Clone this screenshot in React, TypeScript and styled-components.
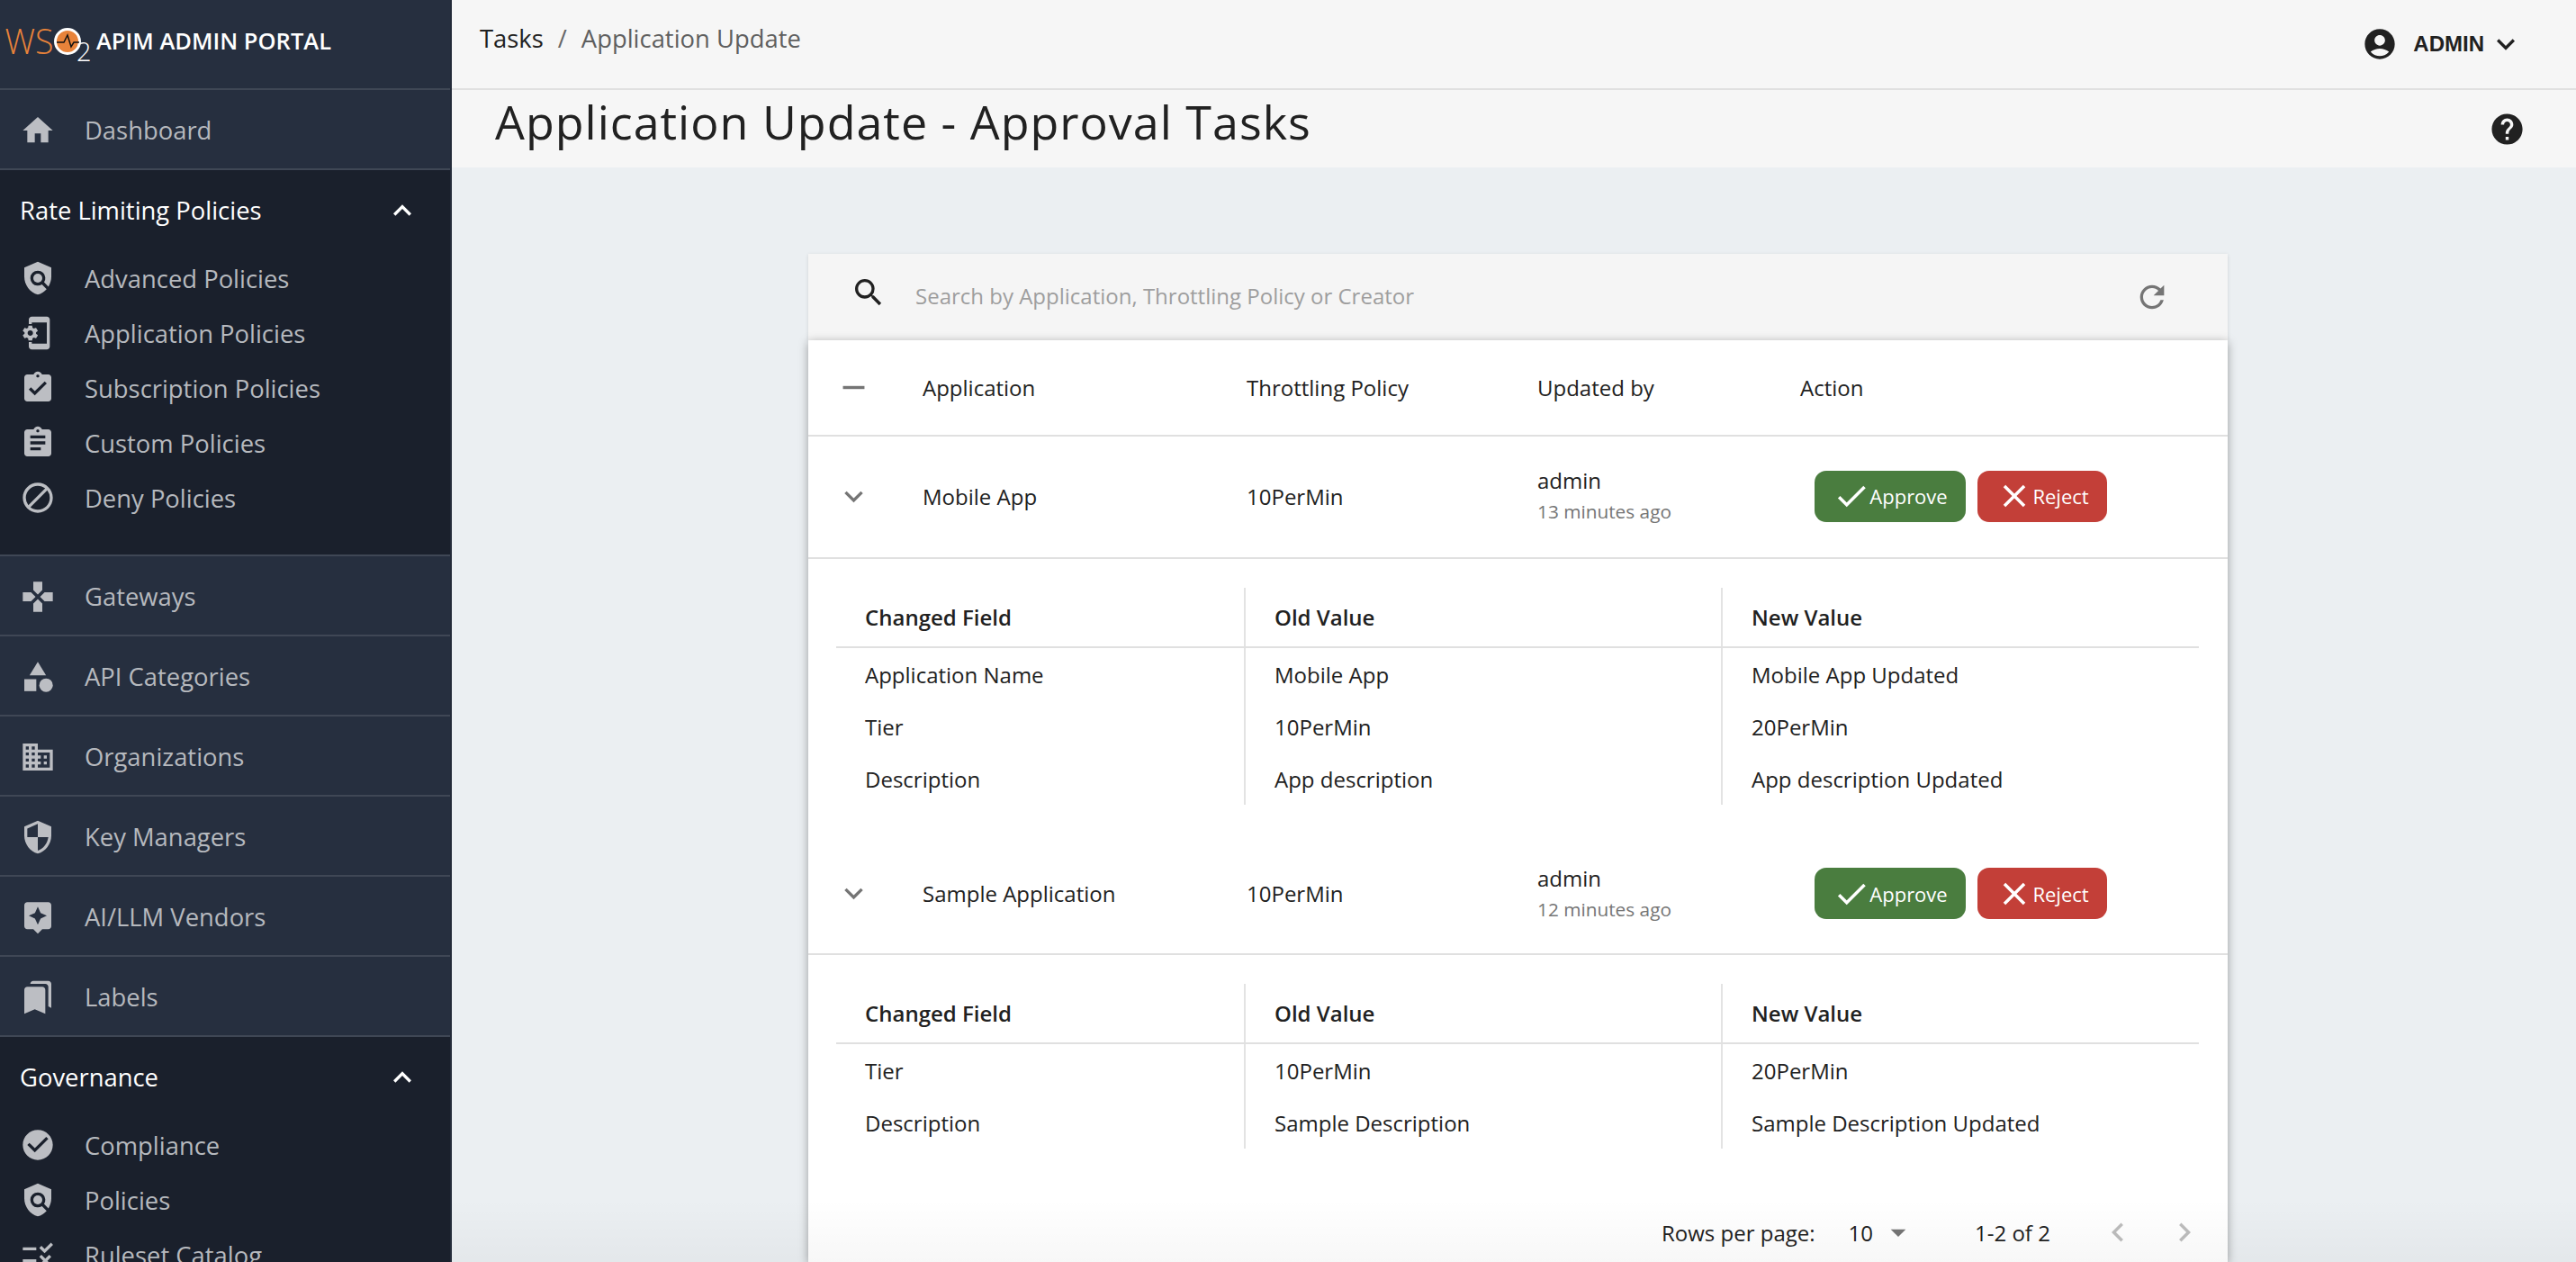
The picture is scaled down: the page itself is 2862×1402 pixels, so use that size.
import React from 'react';
import styled, { createGlobalStyle } from 'styled-components';
import {
  MdHome, MdPolicy, MdPhonelinkSetup, MdAssignmentTurnedIn, MdAssignment, MdBlock, MdGamepad,
  MdCategory, MdBusiness, MdSecurity, MdAssistant, MdBookmarks, MdCheckCircle, MdRule,
  MdKeyboardArrowUp, MdKeyboardArrowDown, MdAccountCircle, MdHelp, MdSearch, MdRefresh, MdRemove,
  MdCheck, MdClose, MdArrowDropDown, MdChevronLeft, MdChevronRight,
} from 'react-icons/md';

const Global = createGlobalStyle`
  html, body { margin: 0; padding: 0; height: 1402px; overflow: hidden; background: #ebeff2; }
  body { font-family: "Open Sans", "Liberation Sans", sans-serif; color: #212121; }
  * { box-sizing: border-box; }
`;

const Page = styled.div`
  display: flex;
  width: 2862px;
  height: 1402px;
  overflow: hidden;
`;

const Sidebar = styled.nav`
  flex: 0 0 502px;
  height: 1402px;
  overflow: hidden;
  background: #1a202c;
  border-right: 2px solid #232b39;
`;

const Brand = styled.div`
  display: flex;
  align-items: center;
  height: 100px;
  padding: 0 0 8px 6px;
  background: #262f3f;
  border-bottom: 2px solid #3f4755;
`;

const BrandName = styled.span`
  margin-left: 5px;
  font-size: 25.5px;
  font-weight: 600;
  color: #fff;
  white-space: nowrap;
`;

const NavRow = styled.div`
  display: flex;
  align-items: center;
  height: 89px;
  padding: 2px 0 0 22px;
  background: #262f3f;
  border-bottom: 2px solid #3f4755;
`;

const IconSlot = styled.span`
  display: flex;
  flex: 0 0 40px;
  width: 40px;
  height: 40px;
  margin-right: 32px;
  color: #bcbec3;
  font-size: 40px;
`;

const NavLabel = styled.span`
  font-size: 27.4px;
  color: #b6b9be;
  white-space: nowrap;
`;

const Group = styled.section<{ $bottom: number }>`
  padding-bottom: ${p => p.$bottom}px;
  background: #1a202c;
`;

const GroupHead = styled.div`
  display: flex;
  align-items: center;
  justify-content: space-between;
  height: 90px;
  padding: 0 33px 1px 22px;
  font-size: 27.4px;
  color: #fff;
  svg { font-size: 40px; }
`;

const GroupItem = styled.div`
  display: flex;
  align-items: center;
  height: 61px;
  padding: 0 0 1px 22px;
`;

const DividerTop = styled.div`
  height: 2px;
  background: #3f4755;
`;

const Main = styled.main`
  position: relative;
  flex: 1;
  height: 1402px;
  overflow: hidden;
`;

const TopBar = styled.header`
  display: flex;
  align-items: center;
  justify-content: space-between;
  height: 100px;
  padding: 0 58px 14px 31px;
  background: #f6f6f6;
  border-bottom: 2px solid #e0e0e0;
`;

const Crumbs = styled.div`
  display: flex;
  align-items: center;
  font-size: 27.4px;
  gap: 16px;
`;

const CrumbSep = styled.span`
  color: #666;
`;

const CrumbCurrent = styled.span`
  color: #5f5f5f;
`;

const UserMenu = styled.div`
  display: flex;
  align-items: center;
  margin-top: 14px;
  color: #212121;
`;

const UserName = styled.span`
  margin: 0 4px 0 17px;
  font-family: "Liberation Sans", Arial, sans-serif;
  font-size: 24px;
  font-weight: 700;
`;

const TitleBand = styled.div`
  display: flex;
  align-items: center;
  justify-content: space-between;
  height: 86px;
  padding: 0 56px 0 48px;
  background: #f6f6f6;
  color: #212121;
`;

const Title = styled.h1`
  margin: -17px 0 0;
  font-size: 52px;
  font-weight: 400;
  letter-spacing: 1px;
  white-space: nowrap;
`;

const Content = styled.div`
  padding: 96px 0 0 396px;
`;

const Card = styled.div`
  width: 1577px;
`;

const SearchBar = styled.div`
  display: flex;
  align-items: center;
  height: 96px;
  padding: 0 64px 0 47px;
  background: #f5f5f5;
  box-shadow: 0 1px 4px rgba(0, 0, 0, 0.12);
`;

const SearchGlyph = styled.span`
  display: flex;
  margin: -10px 32px 0 0;
  color: #212121;
  font-size: 40px;
`;

const Placeholder = styled.span`
  flex: 1;
  margin-top: -3px;
  font-size: 24px;
  color: #9e9e9e;
`;

const RefreshGlyph = styled.span`
  display: flex;
  color: #757575;
  font-size: 40px;
`;

const Sheet = styled.div`
  height: 1024px;
  background: #fff;
  box-shadow: 0 2px 10px rgba(0, 0, 0, 0.35);
`;

const TaskRow = styled.div<{ $height: number; $lift?: number }>`
  display: grid;
  grid-template-columns: 127px 360px 323px 292px 1fr;
  align-items: center;
  height: ${p => p.$height}px;
  padding-bottom: ${p => p.$lift ?? 0}px;
  border-bottom: 2px solid #e0e0e0;
  font-size: 24px;
  color: #212121;
`;

const RowToggle = styled.span`
  display: flex;
  padding-left: 30px;
  color: #757575;
  font-size: 41px;
`;

const Meta = styled.div`
  line-height: 35px;
`;

const MetaSub = styled.div`
  font-size: 20.8px;
  color: #757575;
`;

const Actions = styled.div`
  display: flex;
  gap: 13px;
  margin-left: 16px;
`;

const ActionButton = styled.div<{ $bg: string; $width: number }>`
  display: flex;
  align-items: center;
  justify-content: center;
  width: ${p => p.$width}px;
  height: 57px;
  border-radius: 13px;
  background: ${p => p.$bg};
  color: #fff;
  font-size: 22px;
  svg { font-size: 42px; margin-right: -1px; }
`;

const Detail = styled.div<{ $top: number; $bottom: number }>`
  margin: 0 32px 0 31px;
  padding: ${p => p.$top}px 0 ${p => p.$bottom}px;
`;

const DetailRow = styled.div<{ $head?: boolean }>`
  display: grid;
  grid-template-columns: 455px 530px 1fr;
  height: ${p => (p.$head ? 67 : 58)}px;
  font-size: 24px;
  font-weight: ${p => (p.$head ? 600 : 400)};
  border-bottom: ${p => (p.$head ? '2px solid #e0e0e0' : 'none')};
`;

const DetailCell = styled.div<{ $line?: boolean }>`
  display: flex;
  align-items: center;
  padding-left: 32px;
  border-right: ${p => (p.$line ? '2px solid #e3e3e3' : 'none')};
`;

const Pager = styled.div`
  display: flex;
  align-items: center;
  height: 60px;
  margin-top: 63px;
  padding-left: 948px;
  font-size: 24px;
  color: #212121;
  white-space: nowrap;
`;

const PagerValue = styled.span`
  margin-left: 37px;
`;

const PagerCaret = styled.span`
  display: flex;
  margin-left: 8px;
  color: #757575;
  font-size: 40px;
`;

const PagerRange = styled.span`
  margin-left: 65px;
  margin-right: 54px;
`;

const PagerArrow = styled.span`
  display: flex;
  flex: 0 0 74px;
  color: #bdbdbd;
  font-size: 42px;
`;

const BottomFade = styled.div`
  position: absolute;
  left: 0;
  right: 0;
  bottom: 0;
  height: 70px;
  pointer-events: none;
  background: linear-gradient(rgba(0, 0, 0, 0), rgba(0, 0, 0, 0.03));
`;

const Logo = () => (
  <svg width="96" height="72" viewBox="0 0 96 72" aria-label="WSO2">
    <text x="-0.5" y="51" fontFamily="Open Sans" fontWeight="300" fontSize="39" fill="#e8833a" textLength="54" lengthAdjust="spacingAndGlyphs">WS</text>
    <circle cx="69" cy="37" r="13.5" fill="#e8833a" stroke="#fff" strokeWidth="3" />
    <path d="M57 38h8l4-8 4 13 3-5h6" fill="none" stroke="#111" strokeWidth="1.5" />
    <text x="79" y="59" fontFamily="Open Sans" fontWeight="300" fontSize="29" fill="#fff">2</text>
  </svg>
);

const rateItems: [React.ReactNode, string][] = [
  [<MdPolicy />, 'Advanced Policies'],
  [<MdPhonelinkSetup />, 'Application Policies'],
  [<MdAssignmentTurnedIn />, 'Subscription Policies'],
  [<MdAssignment />, 'Custom Policies'],
  [<MdBlock />, 'Deny Policies'],
];

const midItems: [React.ReactNode, string][] = [
  [<MdGamepad />, 'Gateways'],
  [<MdCategory />, 'API Categories'],
  [<MdBusiness />, 'Organizations'],
  [<MdSecurity />, 'Key Managers'],
  [<MdAssistant />, 'AI/LLM Vendors'],
  [<MdBookmarks />, 'Labels'],
];

const govItems: [React.ReactNode, string][] = [
  [<MdCheckCircle />, 'Compliance'],
  [<MdPolicy />, 'Policies'],
  [<MdRule />, 'Ruleset Catalog'],
];

const tasks = [
  {
    name: 'Mobile App', policy: '10PerMin', by: 'admin', when: '13 minutes ago', height: 136, lift: 2, top: 32, bottom: 32,
    changes: [
      ['Application Name', 'Mobile App', 'Mobile App Updated'],
      ['Tier', '10PerMin', '20PerMin'],
      ['Description', 'App description', 'App description Updated'],
    ],
  },
  {
    name: 'Sample Application', policy: '10PerMin', by: 'admin', when: '12 minutes ago', height: 135, lift: 0, top: 32, bottom: 0,
    changes: [
      ['Tier', '10PerMin', '20PerMin'],
      ['Description', 'Sample Description', 'Sample Description Updated'],
    ],
  },
];

export default function App() {
  return (
    <Page>
      <Global />
      <Sidebar>
        <Brand>
          <Logo />
          <BrandName>APIM ADMIN PORTAL</BrandName>
        </Brand>
        <NavRow>
          <IconSlot><MdHome /></IconSlot>
          <NavLabel>Dashboard</NavLabel>
        </NavRow>
        <Group $bottom={32}>
          <GroupHead>Rate Limiting Policies<MdKeyboardArrowUp /></GroupHead>
          {rateItems.map(([icon, label]) => (
            <GroupItem key={label}>
              <IconSlot>{icon}</IconSlot>
              <NavLabel>{label}</NavLabel>
            </GroupItem>
          ))}
        </Group>
        <DividerTop />
        {midItems.map(([icon, label]) => (
          <NavRow key={label}>
            <IconSlot>{icon}</IconSlot>
            <NavLabel>{label}</NavLabel>
          </NavRow>
        ))}
        <Group $bottom={0}>
          <GroupHead>Governance<MdKeyboardArrowUp /></GroupHead>
          {govItems.map(([icon, label]) => (
            <GroupItem key={label}>
              <IconSlot>{icon}</IconSlot>
              <NavLabel>{label}</NavLabel>
            </GroupItem>
          ))}
        </Group>
      </Sidebar>
      <Main>
        <TopBar>
          <Crumbs>
            <span>Tasks</span>
            <CrumbSep>/</CrumbSep>
            <CrumbCurrent>Application Update</CrumbCurrent>
          </Crumbs>
          <UserMenu>
            <MdAccountCircle size={40} />
            <UserName>ADMIN</UserName>
            <MdKeyboardArrowDown size={40} />
          </UserMenu>
        </TopBar>
        <TitleBand>
          <Title>Application Update - Approval Tasks</Title>
          <MdHelp size={41} />
        </TitleBand>
        <Content>
          <Card>
            <SearchBar>
              <SearchGlyph><MdSearch /></SearchGlyph>
              <Placeholder>Search by Application, Throttling Policy or Creator</Placeholder>
              <RefreshGlyph><MdRefresh /></RefreshGlyph>
            </SearchBar>
            <Sheet>
              <TaskRow $height={107}>
                <RowToggle><MdRemove /></RowToggle>
                <span>Application</span>
                <span>Throttling Policy</span>
                <span>Updated by</span>
                <span>Action</span>
              </TaskRow>
              {tasks.map(task => (
                <React.Fragment key={task.name}>
                  <TaskRow $height={task.height} $lift={task.lift}>
                    <RowToggle><MdKeyboardArrowDown /></RowToggle>
                    <span>{task.name}</span>
                    <span>{task.policy}</span>
                    <Meta>
                      <div>{task.by}</div>
                      <MetaSub>{task.when}</MetaSub>
                    </Meta>
                    <Actions>
                      <ActionButton $bg="#4a7d3f" $width={168}><MdCheck />Approve</ActionButton>
                      <ActionButton $bg="#c33f38" $width={144}><MdClose />Reject</ActionButton>
                    </Actions>
                  </TaskRow>
                  <Detail $top={task.top} $bottom={task.bottom}>
                    <DetailRow $head>
                      <DetailCell $line>Changed Field</DetailCell>
                      <DetailCell $line>Old Value</DetailCell>
                      <DetailCell>New Value</DetailCell>
                    </DetailRow>
                    {task.changes.map(([field, oldValue, newValue]) => (
                      <DetailRow key={field}>
                        <DetailCell $line>{field}</DetailCell>
                        <DetailCell $line>{oldValue}</DetailCell>
                        <DetailCell>{newValue}</DetailCell>
                      </DetailRow>
                    ))}
                  </Detail>
                </React.Fragment>
              ))}
              <Pager>
                <span>Rows per page:</span>
                <PagerValue>10</PagerValue>
                <PagerCaret><MdArrowDropDown /></PagerCaret>
                <PagerRange>1-2 of 2</PagerRange>
                <PagerArrow><MdChevronLeft /></PagerArrow>
                <PagerArrow><MdChevronRight /></PagerArrow>
              </Pager>
            </Sheet>
          </Card>
        </Content>
        <BottomFade />
      </Main>
    </Page>
  );
}
